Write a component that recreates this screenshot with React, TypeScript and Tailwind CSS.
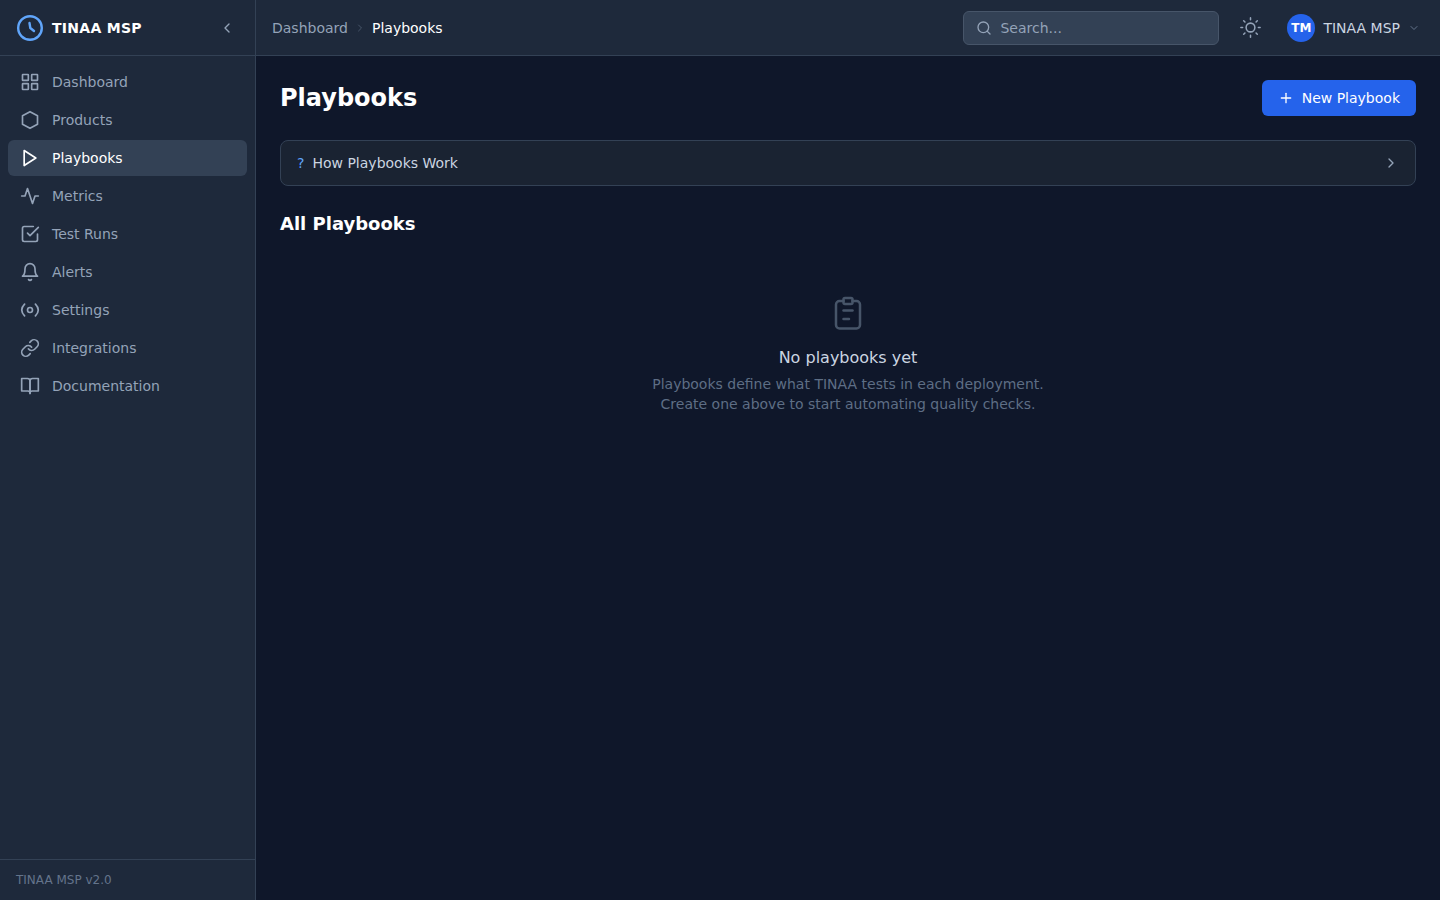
import React from "react";
import { ChevronLeft, ChevronRight, ChevronDown, Search, Plus } from "lucide-react";

type IconProps = { className?: string; children?: React.ReactNode; strokeWidth?: number };
const Svg = ({ className, children, strokeWidth = 2 }: IconProps) => (
  <svg viewBox="0 0 24 24" fill="none" stroke="currentColor" strokeWidth={strokeWidth} strokeLinecap="round" strokeLinejoin="round" className={className}>
    {children}
  </svg>
);

const GridIcon = (p: IconProps) => (
  <Svg {...p}>
    <rect x="3" y="3" width="7" height="7" rx="0.5" />
    <rect x="14" y="3" width="7" height="7" rx="0.5" />
    <rect x="14" y="14" width="7" height="7" rx="0.5" />
    <rect x="3" y="14" width="7" height="7" rx="0.5" />
  </Svg>
);
const HexIcon = (p: IconProps) => (
  <Svg {...p}>
    <polygon points="12,2 21,7 21,17 12,22 3,17 3,7" />
  </Svg>
);
const PlayIcon = (p: IconProps) => (
  <Svg {...p}>
    <polygon points="5,3 19,12 5,21" />
  </Svg>
);
const ActivityIcon = (p: IconProps) => (
  <Svg {...p}>
    <polyline points="22,12 18,12 15,21 9,3 6,12 2,12" />
  </Svg>
);
const CheckSquareIcon = (p: IconProps) => (
  <Svg {...p}>
    <polyline points="9,11 12,14 22,4" />
    <path d="M21 12v7a2 2 0 0 1-2 2H5a2 2 0 0 1-2-2V5a2 2 0 0 1 2-2h11" />
  </Svg>
);
const BellIcon = (p: IconProps) => (
  <Svg {...p}>
    <path d="M18 8A6 6 0 0 0 6 8c0 7-3 9-3 9h18s-3-2-3-9" />
    <path d="M13.73 21a2 2 0 0 1-3.46 0" />
  </Svg>
);
const SettingsIcon = (p: IconProps) => (
  <Svg {...p}>
    <circle cx="12" cy="12" r="3" />
    <path d="M5.5 5C1.1 9.5 1.1 14.5 5.5 19" />
    <path d="M18.5 5C22.9 9.5 22.9 14.5 18.5 19" />
  </Svg>
);
const LinkIcon = (p: IconProps) => (
  <Svg {...p}>
    <path d="M10 13a5 5 0 0 0 7.54.54l3-3a5 5 0 0 0-7.07-7.07l-1.72 1.71" />
    <path d="M14 11a5 5 0 0 0-7.54-.54l-3 3a5 5 0 0 0 7.07 7.07l1.71-1.71" />
  </Svg>
);
const BookIcon = (p: IconProps) => (
  <Svg {...p}>
    <path d="M2 3h7a3 3 0 0 1 3 3v15a2.5 2.5 0 0 0-2.5-3H2z" />
    <path d="M22 3h-7a3 3 0 0 0-3 3v15a2.5 2.5 0 0 1 2.5-3H22z" />
  </Svg>
);
const SunIcon = (p: IconProps) => (
  <Svg {...p}>
    <circle cx="12" cy="12" r="5" />
    <path d="M12 1v2M12 21v2M4.22 4.22l1.42 1.42M18.36 18.36l1.42 1.42M1 12h2M21 12h2M4.22 19.78l1.42-1.42M18.36 5.64l1.42-1.42" />
  </Svg>
);

const nav = [
  { label: "Dashboard", Icon: GridIcon },
  { label: "Products", Icon: HexIcon },
  { label: "Playbooks", Icon: PlayIcon, active: true },
  { label: "Metrics", Icon: ActivityIcon },
  { label: "Test Runs", Icon: CheckSquareIcon },
  { label: "Alerts", Icon: BellIcon },
  { label: "Settings", Icon: SettingsIcon },
  { label: "Integrations", Icon: LinkIcon },
  { label: "Documentation", Icon: BookIcon },
];

export default function App() {
  return (
    <div className="flex h-screen w-full overflow-hidden bg-[#0f172a] font-['DejaVu_Sans',sans-serif] text-sm">
      <aside className="flex w-[256px] shrink-0 flex-col border-r border-[#334155] bg-[#1e293b]">
        <div className="flex h-[56px] shrink-0 items-center justify-between border-b border-[#334155] pl-4 pr-5">
          <div className="flex items-center gap-[8px]">
            <svg viewBox="0 0 28 28" fill="none" stroke="#60a5fa" strokeWidth={2.4} strokeLinecap="round" strokeLinejoin="round" className="h-[28px] w-[28px]">
              <circle cx="14" cy="14" r="11.8" />
              <path d="M13.5 9L14.3 14L18 17" />
            </svg>
            <span className="text-sm font-bold tracking-[0.28px] text-white">TINAA MSP</span>
          </div>
          <ChevronLeft className="h-4 w-4 text-[#94a3b8]" />
        </div>
        <nav className="flex flex-1 flex-col gap-[2px] p-2">
          {nav.map(({ label, Icon, active }) => (
            <div key={label} className={`flex h-9 w-[239px] items-center gap-3 rounded-md px-3 ${active ? "bg-[#334155] text-white" : "text-[#94a3b8]"}`}>
              <Icon className="h-5 w-5 shrink-0" />
              <span>{label}</span>
            </div>
          ))}
        </nav>
        <div className="flex h-[41px] shrink-0 items-center border-t border-[#334155] px-4 text-xs text-[#64748b]">TINAA MSP v2.0</div>
      </aside>
      <div className="flex min-w-0 flex-1 flex-col">
        <header className="flex h-[56px] shrink-0 items-center justify-between border-b border-[#334155] bg-[#1e293b] pl-4 pr-5">
          <div className="flex items-center gap-[6px] text-[#94a3b8]">
            <span>Dashboard</span>
            <ChevronRight className="h-3 w-3 text-[#475569]" />
            <span className="text-white">Playbooks</span>
          </div>
          <div className="flex items-center">
            <div className="flex h-[34px] w-[256px] items-center gap-2 rounded-md border border-[#475569] bg-[#334155] px-3 text-[#94a3b8]">
              <Search className="h-4 w-4 shrink-0" />
              <span>Search...</span>
            </div>
            <SunIcon strokeWidth={1.75} className="ml-[21px] h-[21px] w-[21px] text-[#94a3b8]" />
            <div className="ml-[26px] flex items-center gap-2">
              <div className="flex h-[28px] w-[28px] items-center justify-center rounded-full bg-[#2563eb] text-xs font-bold text-white">TM</div>
              <span className="text-[#cbd5e1]">TINAA MSP</span>
              <ChevronDown className="h-3 w-3 text-[#64748b]" />
            </div>
          </div>
        </header>
        <main className="flex-1 px-6 pt-6">
          <div className="flex h-9 items-center justify-between">
            <h1 className="text-2xl font-bold text-white">Playbooks</h1>
            <button className="flex h-9 items-center gap-2 rounded-md bg-[#2563eb] px-4 text-white">
              <Plus className="h-4 w-4" />
              <span>New Playbook</span>
            </button>
          </div>
          <div className="mt-6 flex h-[46px] items-center justify-between rounded-lg border border-[#334155] bg-[#1a2332] px-4">
            <div className="flex items-center gap-2">
              <span className="text-[#60a5fa]">?</span>
              <span className="text-[#cbd5e1]">How Playbooks Work</span>
            </div>
            <ChevronRight className="h-4 w-4 text-[#94a3b8]" />
          </div>
          <h2 className="mt-6 text-lg font-bold leading-[28px] text-white">All Playbooks</h2>
          <div className="mt-[56px] flex flex-col items-center text-center">
            <svg viewBox="0 0 40 40" fill="none" stroke="#475569" strokeWidth={2.5} strokeLinecap="round" strokeLinejoin="round" className="h-[40px] w-[40px]">
              <rect x="15.5" y="4" width="9" height="6" rx="1.5" />
              <path d="M15.5 7H11.5a3.5 3.5 0 0 0-3.5 3.5V31a3.5 3.5 0 0 0 3.5 3.5h17a3.5 3.5 0 0 0 3.5-3.5V10.5a3.5 3.5 0 0 0-3.5-3.5h-4" />
              <path d="M15.5 16.5h9" />
              <path d="M15.5 25h5.5" />
            </svg>
            <div className="mt-3 text-base leading-6 text-[#cbd5e1]">No playbooks yet</div>
            <div className="mt-1 leading-5 text-[#5e6e85]">
              Playbooks define what TINAA tests in each deployment.
              <br />
              Create one above to start automating quality checks.
            </div>
          </div>
        </main>
      </div>
    </div>
  );
}
